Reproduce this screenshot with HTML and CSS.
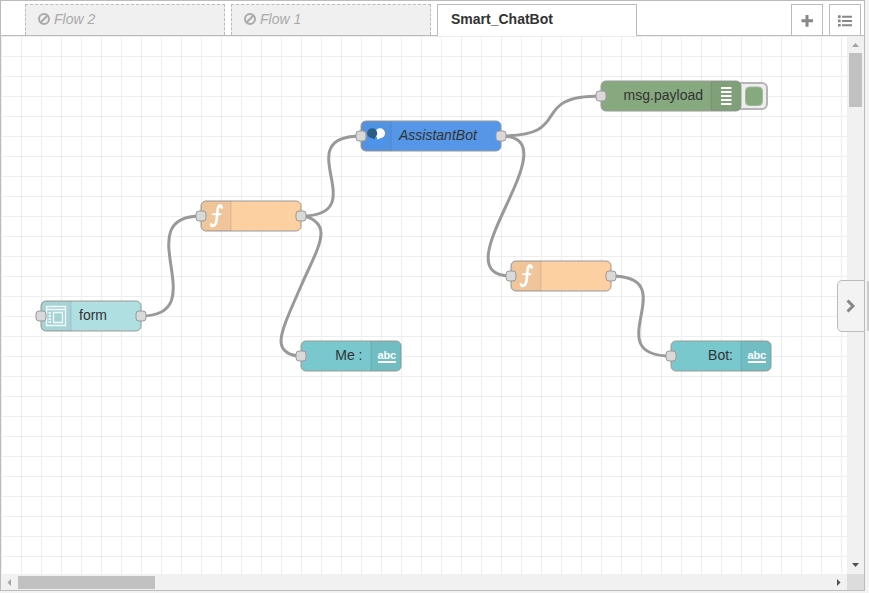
FILE: index.html
```html
<!DOCTYPE html>
<html lang="en">
<head>
<meta charset="utf-8">
<title>Flow editor</title>
<link rel="stylesheet" href="styles.css">
</head>
<body>
<div class="editor">
  <main class="workspace">
    <header class="tabbar">
      <nav class="tabs">
        <div class="tab disabled">
          <svg class="ban" viewBox="0 0 12 12"><circle cx="6" cy="6" r="5"/><path d="M2.500 9.500 9.500 2.500"/></svg>
          <span>Flow 2</span>
        </div>
        <div class="tab disabled">
          <svg class="ban" viewBox="0 0 12 12"><circle cx="6" cy="6" r="5"/><path d="M2.500 9.500 9.500 2.500"/></svg>
          <span>Flow 1</span>
        </div>
        <div class="tab active"><span>Smart_ChatBot</span></div>
      </nav>
      <div class="tab-buttons">
        <div class="tab-button"><svg width="12" height="12" viewBox="0 0 12 12"><path d="M4.500 0h3v4.300H12v3H7.500v4.400h-3V7.300H.500v-3h4z"/></svg></div>
        <div class="tab-button"><svg width="14" height="12" viewBox="0 0 14 12"><path d="M0 .3h2.700v2.700H0zM0 4.600h2.700v2.700H0zM0 8.900h2.700v2.700H0zM4 .8h10v1.900H4zM4 5h10v1.900H4zM4 9.300h10v1.900H4z"/></svg></div>
      </div>
    </header>
    <div class="body">
      <svg class="canvas" width="846" height="538" viewBox="1 36 846 538">
        <defs>
          <pattern id="grid" x="1" y="36" width="20" height="20" patternUnits="userSpaceOnUse">
            <path class="grid-line" d="M0 0h20v1H0zM0 0h1v20H0z"/>
          </pattern>
          <g id="port"><rect class="port" x="-5" y="-5" width="10" height="10" rx="3"/></g>
          <g id="fn-icon">
            <path class="fn-stroke" d="M20.700 6.600C20.600 3.800 17.700 4 16.900 7.200C16 11 16.400 18 14.800 22.200C13.600 25.400 10.300 25.700 10 23.300"/>
            <path class="fn-bar" d="M11.300 13.200h9"/>
          </g>
        </defs>
        <rect x="1" y="36" width="846" height="538" fill="url(#grid)"/>

        <g class="wires">
          <path d="M141 316C216 316 126 216 201 216"/>
          <path d="M301 216C376 216 286 136 361 136"/>
          <path d="M301 216C311 216 321 223.500 321 233C321 246 311 263 301 286C291 309 281 330 281 341S291 356 301 356"/>
          <path d="M501 136C576 136 526 96 601 96"/>
          <path d="M501 136C576 136 436 276 511 276"/>
          <path d="M611 276C686 276 596 356 671 356"/>
        </g>

        <g transform="translate(41 301)">
          <rect class="node form" width="100" height="30" rx="5"/>
          <path class="shade" d="M5 0H30V30H5Q0 30 0 25V5Q0 0 5 0Z"/><path class="divider" d="M30 .5v29"/>
          <path class="form-icon" d="M5.500 5.500h19v19h-19zM5.500 8.500h19M12.500 11.500h9v10h-9z"/>
          <path class="form-dots" d="M7.500 11h2.500v2H7.500zM7.500 14h2.500v2H7.500zM7.500 17h2.500v2H7.500zM7.500 20h2.500v2H7.500z"/>
          <text x="38" y="19">form</text>
          <use href="#port" x="0" y="15"/><use href="#port" x="100" y="15"/>
        </g>
        <g transform="translate(201 201)">
          <rect class="node function" width="100" height="30" rx="5"/>
          <path class="shade" d="M5 0H30V30H5Q0 30 0 25V5Q0 0 5 0Z"/><path class="divider" d="M30 .5v29"/>
          <use href="#fn-icon"/>
          <use href="#port" x="0" y="15"/><use href="#port" x="100" y="15"/>
        </g>
        <g transform="translate(361 121)">
          <rect class="node assistant" width="140" height="30" rx="5"/>
          <path class="shade light" d="M5 0H30V30H5Q0 30 0 25V5Q0 0 5 0Z"/><path class="divider light" d="M30 .5v29"/>
          <circle class="halo" cx="15" cy="15" r="10.500"/>
          <g class="bubble-light"><circle cx="19" cy="12.300" r="5"/><path d="M16 15.500v3l4-1.500z"/></g>
          <g class="bubble-dark"><circle cx="11.200" cy="12.300" r="5"/><path d="M10 16.500l4 2v-3.500z"/></g>
          <text class="italic" x="38" y="19">AssistantBot</text>
          <use href="#port" x="0" y="15"/><use href="#port" x="140" y="15"/>
        </g>
        <g transform="translate(601 81)">
          <rect class="toggle" x="135" y="2" width="31" height="26" rx="5"/>
          <rect class="toggle-fill" x="144.500" y="6" width="17" height="18.500" rx="4"/>
          <rect class="node debug" width="140" height="30" rx="5"/>
          <path class="shade" d="M110 0h25q5 0 5 5v20q0 5-5 5h-25z"/><path class="divider" d="M110 .5v29"/>
          <path class="debug-icon" d="M120 7h10.500M120 11h10.500M120 15h10.500M120 19h10.500M120 23h10.500"/>
          <text x="102" y="19" text-anchor="end">msg.payload</text>
          <use href="#port" x="0" y="15"/>
        </g>
        <g transform="translate(511 261)">
          <rect class="node function" width="100" height="30" rx="5"/>
          <path class="shade" d="M5 0H30V30H5Q0 30 0 25V5Q0 0 5 0Z"/><path class="divider" d="M30 .5v29"/>
          <use href="#fn-icon"/>
          <use href="#port" x="0" y="15"/><use href="#port" x="100" y="15"/>
        </g>
        <g transform="translate(301 341)">
          <rect class="node text-node" width="100" height="30" rx="5"/>
          <path class="shade" d="M70 0h25q5 0 5 5v20q0 5-5 5h-25z"/><path class="divider" d="M70 .5v29"/>
          <text class="abc" x="76.500" y="18" textLength="18.500">abc</text><path class="underline" d="M77 21h18"/>
          <text x="61.500" y="19" text-anchor="end">Me :</text>
          <use href="#port" x="0" y="15"/>
        </g>
        <g transform="translate(671 341)">
          <rect class="node text-node" width="100" height="30" rx="5"/>
          <path class="shade" d="M70 0h25q5 0 5 5v20q0 5-5 5h-25z"/><path class="divider" d="M70 .5v29"/>
          <text class="abc" x="76.500" y="18" textLength="18.500">abc</text><path class="underline" d="M77 21h18"/>
          <text x="62" y="19" text-anchor="end">Bot:</text>
          <use href="#port" x="0" y="15"/>
        </g>
      </svg>
      <div class="vscroll">
        <svg width="17" height="17"><path class="arrow idle" d="M5 11 8.500 7 12 11z"/></svg>
        <div class="vthumb"></div>
        <svg width="17" height="17"><path class="arrow" d="M5 6h7l-3.500 4z"/></svg>
      </div>
      <div class="hscroll">
        <svg width="17" height="16"><path class="arrow idle" d="M10 5v7L6.500 8.500z"/></svg>
        <div class="hthumb"></div>
        <svg width="17" height="16"><path class="arrow" d="M7 5v7l3.500-3.500z"/></svg>
      </div>
      <div class="corner"></div>
    </div>
  </main>
  <aside class="separator"><div class="grip"></div></aside>
  <div class="sidebar-toggle"><svg width="10" height="14" viewBox="0 0 10 14"><path d="M1.500 1.500 7 7 1.500 12.500"/></svg></div>
</div>
</body>
</html>
```
FILE: styles.css
```css
* { box-sizing: border-box; }
body {
  margin: 0;
  overflow: hidden;
  font-family: "Liberation Sans", Arial, sans-serif;
  font-size: 14px;
}
svg { display: block; flex: none; }
.editor {
  position: relative;
  display: grid;
  grid-template-columns: 865px 4px;
  grid-template-rows: 591px;
  height: 593px;
  background: #f3f3f3;
}
.workspace {
  display: flex;
  flex-direction: column;
  border: 1px solid #bbb;
  background: #fff;
}
.tabbar {
  display: flex;
  justify-content: space-between;
  height: 35px;
  padding: 3px 3px 0 24px;
  border-bottom: 1px solid #bbb;
}
.tabs { display: flex; gap: 6px; }
.tab {
  display: flex;
  gap: 4px;
  width: 200px;
  height: 31px;
  padding: 0 13px;
  border: 1px solid #bbb;
  border-bottom: 0;
  line-height: 29px;
  font-size: 14px;
}
.tab.disabled {
  border-style: dashed;
  background: #f0f0f0;
  color: #aaa;
  font-style: italic;
  padding-left: 12px;
}
.tab.active {
  height: 32px;
  background: #fff;
  color: #333;
  font-weight: bold;
}
.ban {
  width: 12px;
  height: 12px;
  margin-top: 8px;
  fill: none;
  stroke: #aaa;
  stroke-width: 2;
}
.tab-buttons { display: flex; gap: 6px; }
.tab-button {
  display: flex;
  align-items: center;
  justify-content: center;
  width: 32px;
  height: 31px;
  padding-top: 2px;
  border: 1px solid #bbb;
  border-bottom: 0;
  fill: #888;
}
.body {
  display: grid;
  grid-template-columns: 846px 17px;
  grid-template-rows: 538px 16px;
}
.grid-line { fill: #eee; }
.wires { fill: none; stroke: #999; stroke-width: 3; }
.node { stroke: #999; stroke-width: 1; }
.form { fill: #afdfe1; }
.function { fill: #fdd0a2; }
.assistant { fill: #5596e6; }
.debug { fill: #87a980; }
.text-node { fill: #78c8cd; }
.shade { fill: #000; fill-opacity: .05; }
.shade.light { fill-opacity: .025; }
.divider { fill: none; stroke: #000; stroke-opacity: .1; }
.divider.light { stroke-opacity: .08; }
.port { fill: #d9d9d9; stroke: #999; }
.canvas text { fill: #333; font-size: 14px; }
.canvas .italic { font-style: italic; }
.canvas .abc { fill: #fff; font-size: 11px; font-weight: bold; }
.underline { stroke: #fff; stroke-width: 2; }
.form-icon { fill: none; stroke: #fff; stroke-opacity: .85; stroke-width: 1.3; }
.form-dots { fill: #fff; fill-opacity: .75; }
.fn-stroke { fill: none; stroke: #fff; stroke-width: 2.7; stroke-linecap: round; }
.fn-bar { stroke: #fff; stroke-width: 2; }
.halo { fill: #4d94eb; }
.bubble-light { fill: #fff; }
.bubble-dark { fill: #2c5c80; }
.debug-icon { stroke: #fff; stroke-width: 1.8; }
.toggle { fill: #eee; stroke: #b5b5b5; stroke-width: 2; }
.toggle-fill { fill: #87a980; stroke: #a5b5a2; }
.vscroll {
  display: flex;
  flex-direction: column;
  background: #f1f1f1;
}
.vthumb {
  width: 13px;
  height: 54px;
  margin: 0 2px auto;
  background: #c1c1c1;
}
.hscroll { display: flex; background: #f1f1f1; }
.hthumb {
  width: 137px;
  height: 13px;
  margin: 2px auto 0 0;
  background: #c1c1c1;
}
.corner { background: #dcdcdc; }
.arrow { fill: #505050; }
.arrow.idle { fill: #a3a3a3; }
.separator {
  display: flex;
  align-items: center;
  justify-content: flex-end;
}
.grip { width: 2px; height: 50px; margin-top: 20px; background: #ccc; }
.sidebar-toggle {
  position: absolute;
  left: 837px;
  top: 280px;
  display: flex;
  align-items: center;
  justify-content: center;
  width: 28px;
  height: 52px;
  border: 1px solid #bbb;
  border-radius: 5px 0 0 5px;
  background: #f3f3f3;
}
.sidebar-toggle path { fill: none; stroke: #888; stroke-width: 3; }
```
